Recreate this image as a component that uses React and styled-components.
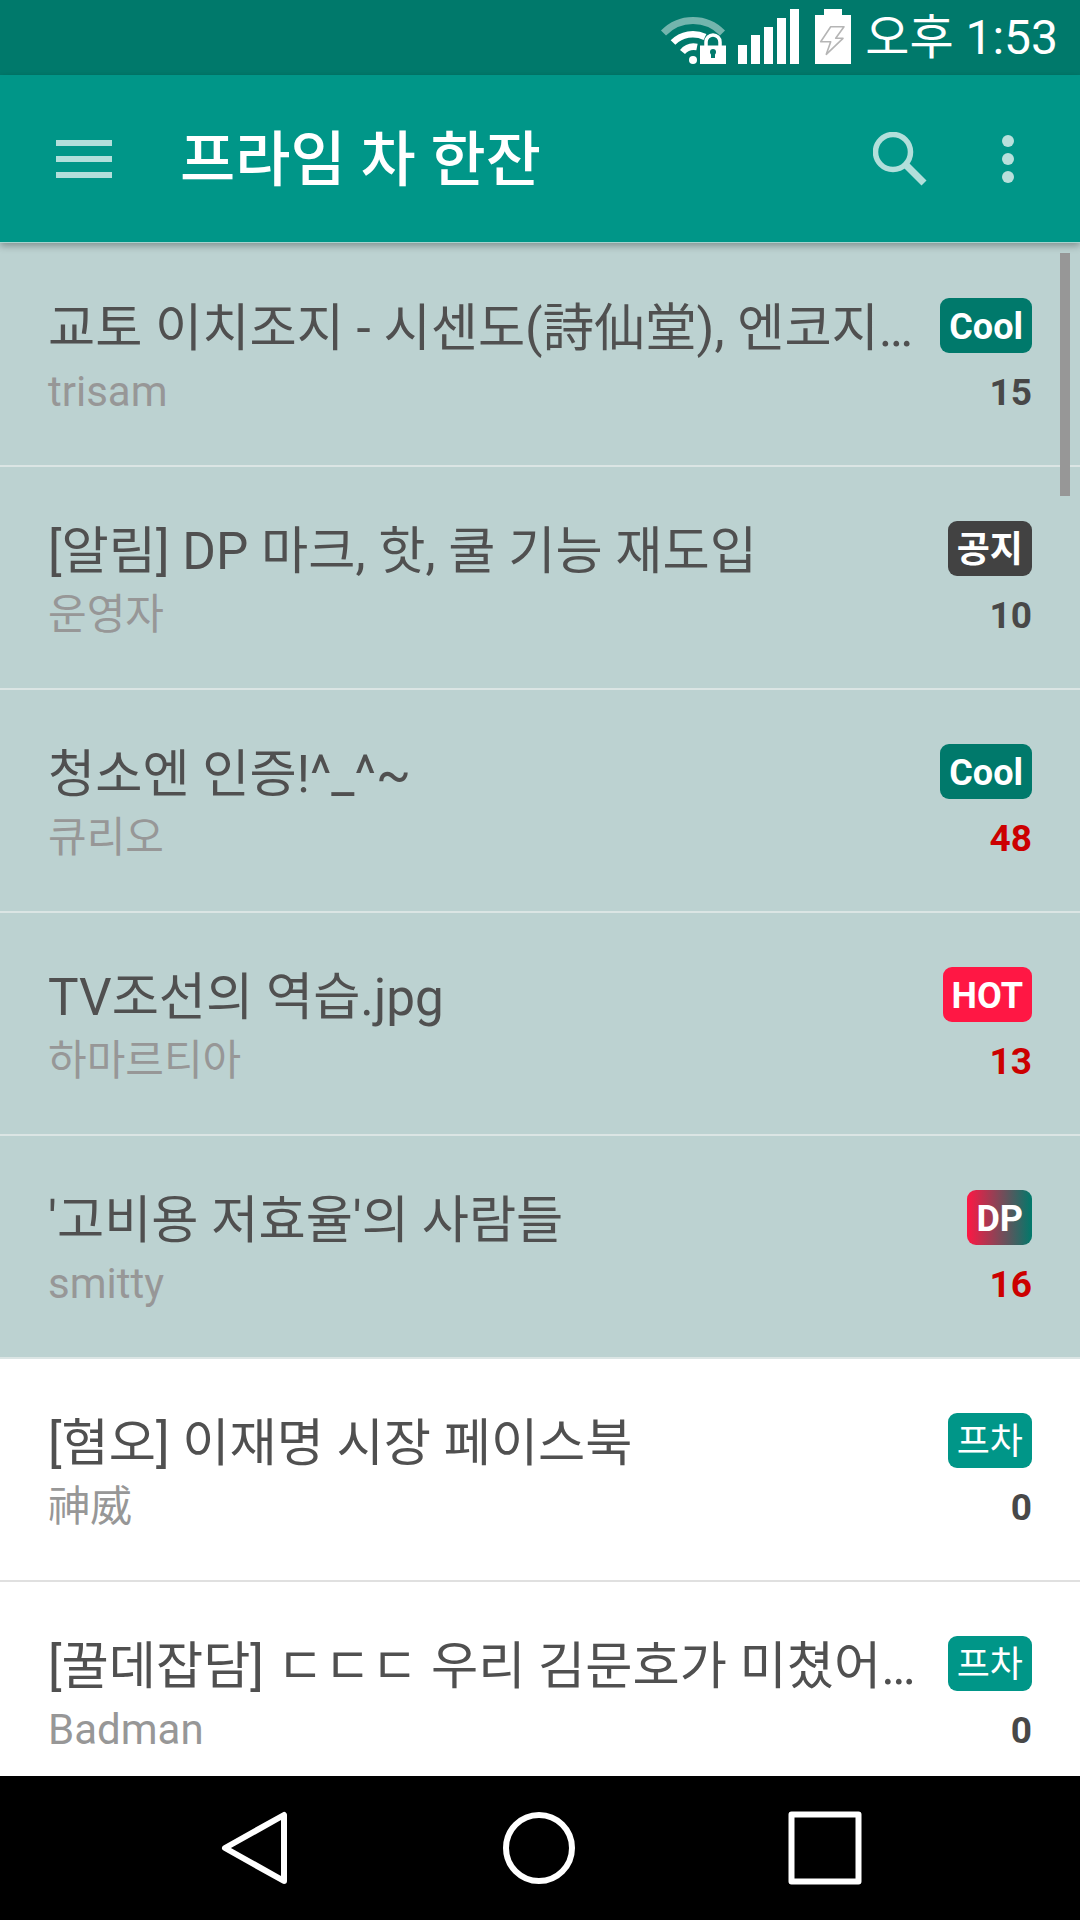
import React from "react";
import styled, { createGlobalStyle } from "styled-components";

const Global = createGlobalStyle`
  html, body { margin: 0; padding: 0; background: #fff; }
  #root { width: 1080px; height: 1920px; }
  * { box-sizing: border-box; }
`;
const FONT = `Roboto, "Noto Sans CJK KR", sans-serif`;

const Screen = styled.div`
  width: 1080px; height: 1920px; display: flex; flex-direction: column; overflow: hidden;
  font-family: ${FONT}; background: #fff;
`;
const StatusBar = styled.div`
  height: 75px; flex: none; background: #00796b; display: flex; align-items: flex-start; justify-content: flex-end;
  padding-right: 22px; color: #fff;
`;
const Time = styled.div`
  font-size: 48px; line-height: 75px; margin-left: 14px; white-space: nowrap; height: 75px;
`;
const StatusIcon = styled.svg`
  display: block; flex: none; margin-top: ${p => p.$top}px; margin-left: ${p => p.$left}px;
`;
const AppBar = styled.header`
  height: 168px; flex: none; background: #009688; display: flex; align-items: center; position: relative; z-index: 2;
  border-bottom: 1px solid #a9d3ce; box-shadow: 0 3px 7px rgba(0,0,0,.3);
`;
const BarIcon = styled.svg`
  display: block; flex: none; margin-left: ${p => p.$left}px; margin-right: ${p => p.$right || 0}px;
`;
const AppTitle = styled.h1`
  margin: 4px 0 0 68px; font-size: 60px; font-weight: 500; color: #fff; line-height: 80px; white-space: nowrap; flex: 1;
`;
const List = styled.main`
  flex: 1; min-height: 0; overflow: hidden; position: relative; padding-top: 1px;
  background: #bcd2d1;
`;
const ScrollThumb = styled.div`
  position: absolute; top: 10px; right: 10px; width: 10px; height: 243px; background: #979797;
`;
const Row = styled.article`
  height: 223px; flex: none; display: flex; padding: 54px 48px 0; gap: 14px;
  background: ${p => (p.$read ? "#bcd2d1" : "#fff")};
  border-bottom: 2px solid ${p => (p.$read ? "#dbe5e4" : "#e0e0e0")};
`;
const Main = styled.div`
  flex: 1; min-width: 0;
`;
const Title = styled.div`
  font-size: 51.3px; line-height: 62px; height: 62px; color: #505050; white-space: nowrap; overflow: hidden; text-overflow: ellipsis;
`;
const Author = styled.div`
  font-size: 42px; line-height: 50px; margin-top: 7px; color: #979797; white-space: nowrap;
`;
const Side = styled.div`
  flex: none; display: flex; flex-direction: column; align-items: flex-end;
`;
const badgeBg = {
  cool: "#00796b",
  notice: "#424242",
  hot: "#ff1744",
  dp: "linear-gradient(to right, #ff1744, #00796b)",
  pcha: "#009688",
};
const Badge = styled.span`
  height: 55px; padding: 0 9px; border-radius: 9px; color: #fff; font-size: 36px; line-height: 59px;
  font-weight: ${p => (p.$variant === "pcha" ? 400 : 700)}; white-space: nowrap; background: ${p => badgeBg[p.$variant]};
`;
const Count = styled.div`
  font-size: 37px; line-height: 44px; margin-top: 18px; font-weight: 700;
  color: ${p => (p.$red ? "#cc0000" : "#484848")};
`;
const NavBar = styled.nav`
  height: 144px; flex: none; background: #000; display: grid; grid-template-columns: repeat(3, 285px);
  justify-content: center; justify-items: center; align-items: center;
`;

const rows = [
  { t: "교토 이치조지 - 시센도(詩仙堂), 엔코지(圓光寺), 만슈인", a: "trisam", b: "Cool", v: "cool", c: 15, read: true },
  { t: "[알림] DP 마크, 핫, 쿨 기능 재도입", a: "운영자", b: "공지", v: "notice", c: 10, read: true },
  { t: "청소엔 인증!^_^~", a: "큐리오", b: "Cool", v: "cool", c: 48, red: true, read: true },
  { t: "TV조선의 역습.jpg", a: "하마르티아", b: "HOT", v: "hot", c: 13, red: true, read: true },
  { t: "'고비용 저효율'의 사람들", a: "smitty", b: "DP", v: "dp", c: 16, red: true, read: true },
  { t: "[혐오] 이재명 시장 페이스북", a: "神威", b: "프차", v: "pcha", c: 0 },
  { t: "[꿀데잡담] ㄷㄷㄷ 우리 김문호가 미쳤어요 진짜로", a: "Badman", b: "프차", v: "pcha", c: 0 },
];

const Wifi = () => (
  <StatusIcon $top={16} $left={0} width="66" height="48" viewBox="0 0 66 48" fill="none">
    <path d="M3.5 17 A41 41 0 0 1 62.5 17" stroke="#fff" strokeOpacity=".45" strokeWidth="7" />
    <path d="M13 26.5 A28 28 0 0 1 45 21" stroke="#fff" strokeWidth="6.5" />
    <path d="M22.5 36 A15 15 0 0 1 37 31" stroke="#fff" strokeWidth="6.5" />
    <circle cx="33" cy="44" r="4" fill="#fff" />
    <path d="M40 29.5 h26 V48 H40 Z" fill="#fff" />
    <path d="M46 30 v-4 a7 7 0 0 1 14 0 v4" stroke="#fff" strokeWidth="3.5" />
    <rect x="51" y="34" width="4" height="8" fill="#00796b" />
    <circle cx="53" cy="36" r="3" fill="#00796b" />
  </StatusIcon>
);
const Signal = () => (
  <StatusIcon $top={9} $left={12} width="61" height="55" viewBox="0 0 61 55" fill="#fff">
    <rect x="0" y="36" width="9" height="19" />
    <rect x="13" y="26" width="9" height="29" />
    <rect x="26" y="18" width="9" height="37" />
    <rect x="39" y="9" width="9" height="46" />
    <rect x="52" y="0" width="9" height="55" />
  </StatusIcon>
);
const Battery = () => (
  <StatusIcon $top={9} $left={16} width="36" height="55" viewBox="0 0 36 55">
    <path d="M9 0 H27 V6 H36 V55 H0 V6 H9 Z" fill="#fff" />
    <path d="M15.7 17.7 H29 L20.7 29.3 H28 L11.3 45.3 L15.7 32.7 H5.7 Z" fill="#fff" stroke="#b5b5b5" strokeWidth="1.6" strokeLinejoin="round" />
  </StatusIcon>
);

export default function App() {
  return (
    <Screen>
      <Global />
      <StatusBar>
        <Wifi />
        <Signal />
        <Battery />
        <Time>오후 1:53</Time>
      </StatusBar>
      <AppBar>
        <BarIcon $left={56} width="56" height="38" viewBox="0 0 56 38" fill="#b2dfdb">
          <rect y="0" width="56" height="6" />
          <rect y="16" width="56" height="6" />
          <rect y="32" width="56" height="6" />
        </BarIcon>
        <AppTitle>프라임 차 한잔</AppTitle>
        <BarIcon width="54" height="54" viewBox="0 0 54 54" fill="none" $left={0} $right={75}>
          <circle cx="20" cy="20" r="17.5" stroke="#b2dfdb" strokeWidth="5.5" />
          <path d="M33 33 L51 51" stroke="#b2dfdb" strokeWidth="7" />
        </BarIcon>
        <BarIcon width="12" height="48" viewBox="0 0 12 48" fill="#b9e0dc" $left={0} $right={66}>
          <circle cx="6" cy="6" r="6" />
          <circle cx="6" cy="24" r="6" />
          <circle cx="6" cy="42" r="6" />
        </BarIcon>
      </AppBar>
      <List>
        {rows.map((r, i) => (
          <Row key={i} $read={r.read}>
            <Main>
              <Title>{r.t}</Title>
              <Author>{r.a}</Author>
            </Main>
            <Side>
              <Badge $variant={r.v}>{r.b}</Badge>
              <Count $red={r.red}>{r.c}</Count>
            </Side>
          </Row>
        ))}
        <ScrollThumb />
      </List>
      <NavBar>
        <svg width="74" height="74" viewBox="0 0 74 74" fill="none" stroke="#fff" strokeWidth="6" strokeLinejoin="round">
          <path d="M7 37 L66 4 V70 Z" />
        </svg>
        <svg width="74" height="74" viewBox="0 0 74 74" fill="none" stroke="#fff" strokeWidth="6">
          <circle cx="36" cy="37" r="33" />
        </svg>
        <svg width="74" height="74" viewBox="0 0 74 74" fill="none" stroke="#fff" strokeWidth="6" strokeLinejoin="round">
          <rect x="3.5" y="3.5" width="67" height="67" />
        </svg>
      </NavBar>
    </Screen>
  );
}
